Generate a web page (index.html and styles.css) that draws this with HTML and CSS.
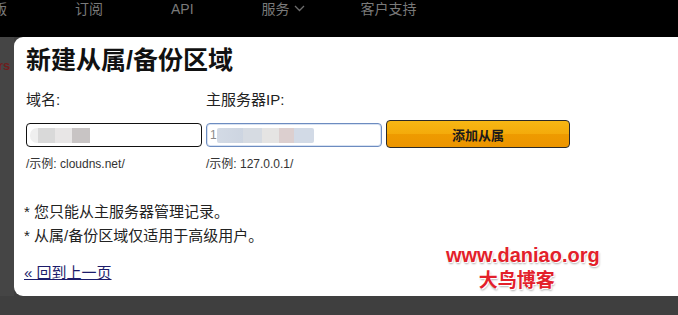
FILE: index.html
```html
<!DOCTYPE html>
<html lang="zh-CN">
<head>
<meta charset="utf-8">
<title>新建从属/备份区域</title>
<link rel="stylesheet" href="styles.css">
</head>
<body>
<div class="topnav">
  <span class="nav-item nav-cut">版</span>
  <span class="nav-item">订阅</span>
  <span class="nav-item">API</span>
  <span class="nav-item">服务 <svg class="chev" width="11" height="7" viewBox="0 0 11 7"><path d="M1 1l4.5 4.5L10 1" fill="none" stroke="#6e6e6e" stroke-width="1.3"/></svg></span>
  <span class="nav-item nav-last">客户支持</span>
</div>
<div class="stage">
  <div class="behind"><span class="behind-text">rs</span></div>
  <div class="modal">
    <h1 class="modal-title">新建从属/备份区域</h1>
    <div class="form-grid">
      <label class="field-label">域名:</label>
      <label class="field-label">主服务器IP:</label>
      <span></span>
      <div class="fake-input"><span class="smudge smudge-domain"></span></div>
      <div class="fake-input focused"><span class="first-digit">1</span><span class="smudge smudge-ip"></span></div>
      <button class="add-btn">添加从属</button>
      <div class="hint">/示例: cloudns.net/</div>
      <div class="hint">/示例: 127.0.0.1/</div>
      <span></span>
    </div>
    <div class="notes">
      <p>* 您只能从主服务器管理记录。</p>
      <p>* 从属/备份区域仅适用于高级用户。</p>
    </div>
    <a class="back-link" href="#">« 回到上一页</a>
    <div class="watermark">
      <div class="wm-url">www.daniao.org</div>
      <div class="wm-name">大鸟博客</div>
    </div>
  </div>
</div>
</body>
</html>
```

FILE: styles.css
```css
html, body {
  margin: 0px;
  padding: 0px;
}

body {
  background-color: #3f3f3f;
  width: 678px;
  height: 315px;
  overflow: hidden;
  font-family: "Liberation Sans", "Noto Sans CJK SC", sans-serif;
}

.topnav {
  height: 37px;
  background-color: #000000;
  display: flex;
  align-items: flex-start;
  color: #7a7a7a;
  font-size: 14px;
  line-height: 16px;
  padding-top: 1px;
  box-sizing: border-box;
  gap: 68px;
  white-space: nowrap;
}

.nav-cut {
  margin-left: -7px;
}

.nav-item .chev {
  vertical-align: 2px;
  margin-left: 1px;
}

.nav-last {
  margin-left: -13px;
}

.stage {
  display: flex;
  height: 259px;
}

.behind {
  width: 14px;
  flex: none;
  background-color: #454545;
  overflow: hidden;
}

.behind-text {
  display: block;
  margin-top: 21px;
  margin-left: -2px;
  color: #6e1d1d;
  font-size: 13px;
  font-weight: bold;
}

.modal {
  position: relative;
  flex: 1;
  background-color: #ffffff;
  border-radius: 9px 0 0 9px;
  padding: 8px 0 0 12px;
}

.modal-title {
  margin: 0px;
  font-size: 25px;
  line-height: 30px;
  font-weight: bold;
  color: #111111;
}

.form-grid {
  display: grid;
  grid-template-columns: 176px 176px 184px;
  column-gap: 4px;
  margin-top: 15px;
  align-items: center;
}

.field-label {
  font-size: 15px;
  line-height: 20px;
  color: #222222;
  margin-bottom: 10px;
}

.fake-input {
  height: 24px;
  box-sizing: border-box;
  border: 1px solid #111111;
  border-radius: 4px;
  display: flex;
  align-items: center;
  padding-left: 3px;
  margin-top: 2px;
}

.fake-input.focused {
  border-color: #6d8cc0;
  box-shadow: inset 0 0 0 1px #d7e2f2;
}

.first-digit {
  font-size: 12px;
  color: #8a8a8a;
  margin-right: 0px;
}

.smudge {
  display: block;
  height: 15px;
  border-radius: 7px 0 0 7px;
}

.smudge-domain {
  width: 60px;
  background: linear-gradient(to right, #efefef 0px, #efefef 8px, #d9d9d9 8px, #d9d9d9 25px, #e8e6e6 25px, #e8e6e6 42px, #c8c4c4 42px);
}

.smudge-ip {
  width: 97px;
  border-radius: 2px;
  background: linear-gradient(to right, #d3dae5 0px, #cdd5e1 26px, #d6dbe2 26px, #d6dbe2 45px, #e5e4e3 45px, #e5e4e3 62px, #dccfcf 62px, #dccfcf 77px, #d2dae6 77px);
}

.add-btn {
  height: 28px;
  border: 1px solid #2a2a2a;
  border-radius: 4px;
  background: linear-gradient(#f7b714 0%, #f4ab0b 48%, #ee9a00 52%, #ec9500 100%);
  font-family: "Liberation Sans", "Noto Sans CJK SC", sans-serif;
  font-size: 13px;
  font-weight: bold;
  color: #1a1a1a;
  padding: 0px;
}

.hint {
  font-size: 12px;
  line-height: 16px;
  color: #333333;
  margin-top: 8px;
}

.notes {
  margin-top: 28px;
  margin-left: -2px;
  font-size: 15px;
  line-height: 24px;
  color: #222222;
}

.notes p {
  margin: 0px;
}

.back-link {
  display: inline-block;
  margin-top: 15px;
  margin-left: -2px;
  font-size: 15px;
  line-height: 20px;
  color: #1c1c6b;
}

.watermark {
  position: absolute;
  left: 432px;
  top: 206px;
  color: #e3202a;
  font-weight: bold;
  font-size: 20px;
  line-height: 24px;
  text-shadow: 1px 1px 0 #ffffff, -1px -1px 0 #ffffff, 1px 2px 2px #b0b0b0;
  text-align: center;
}

.wm-name {
  margin-left: -12px;
  font-family: "Noto Sans CJK SC", sans-serif;
  font-size: 19px;
  line-height: 24px;
}
```
